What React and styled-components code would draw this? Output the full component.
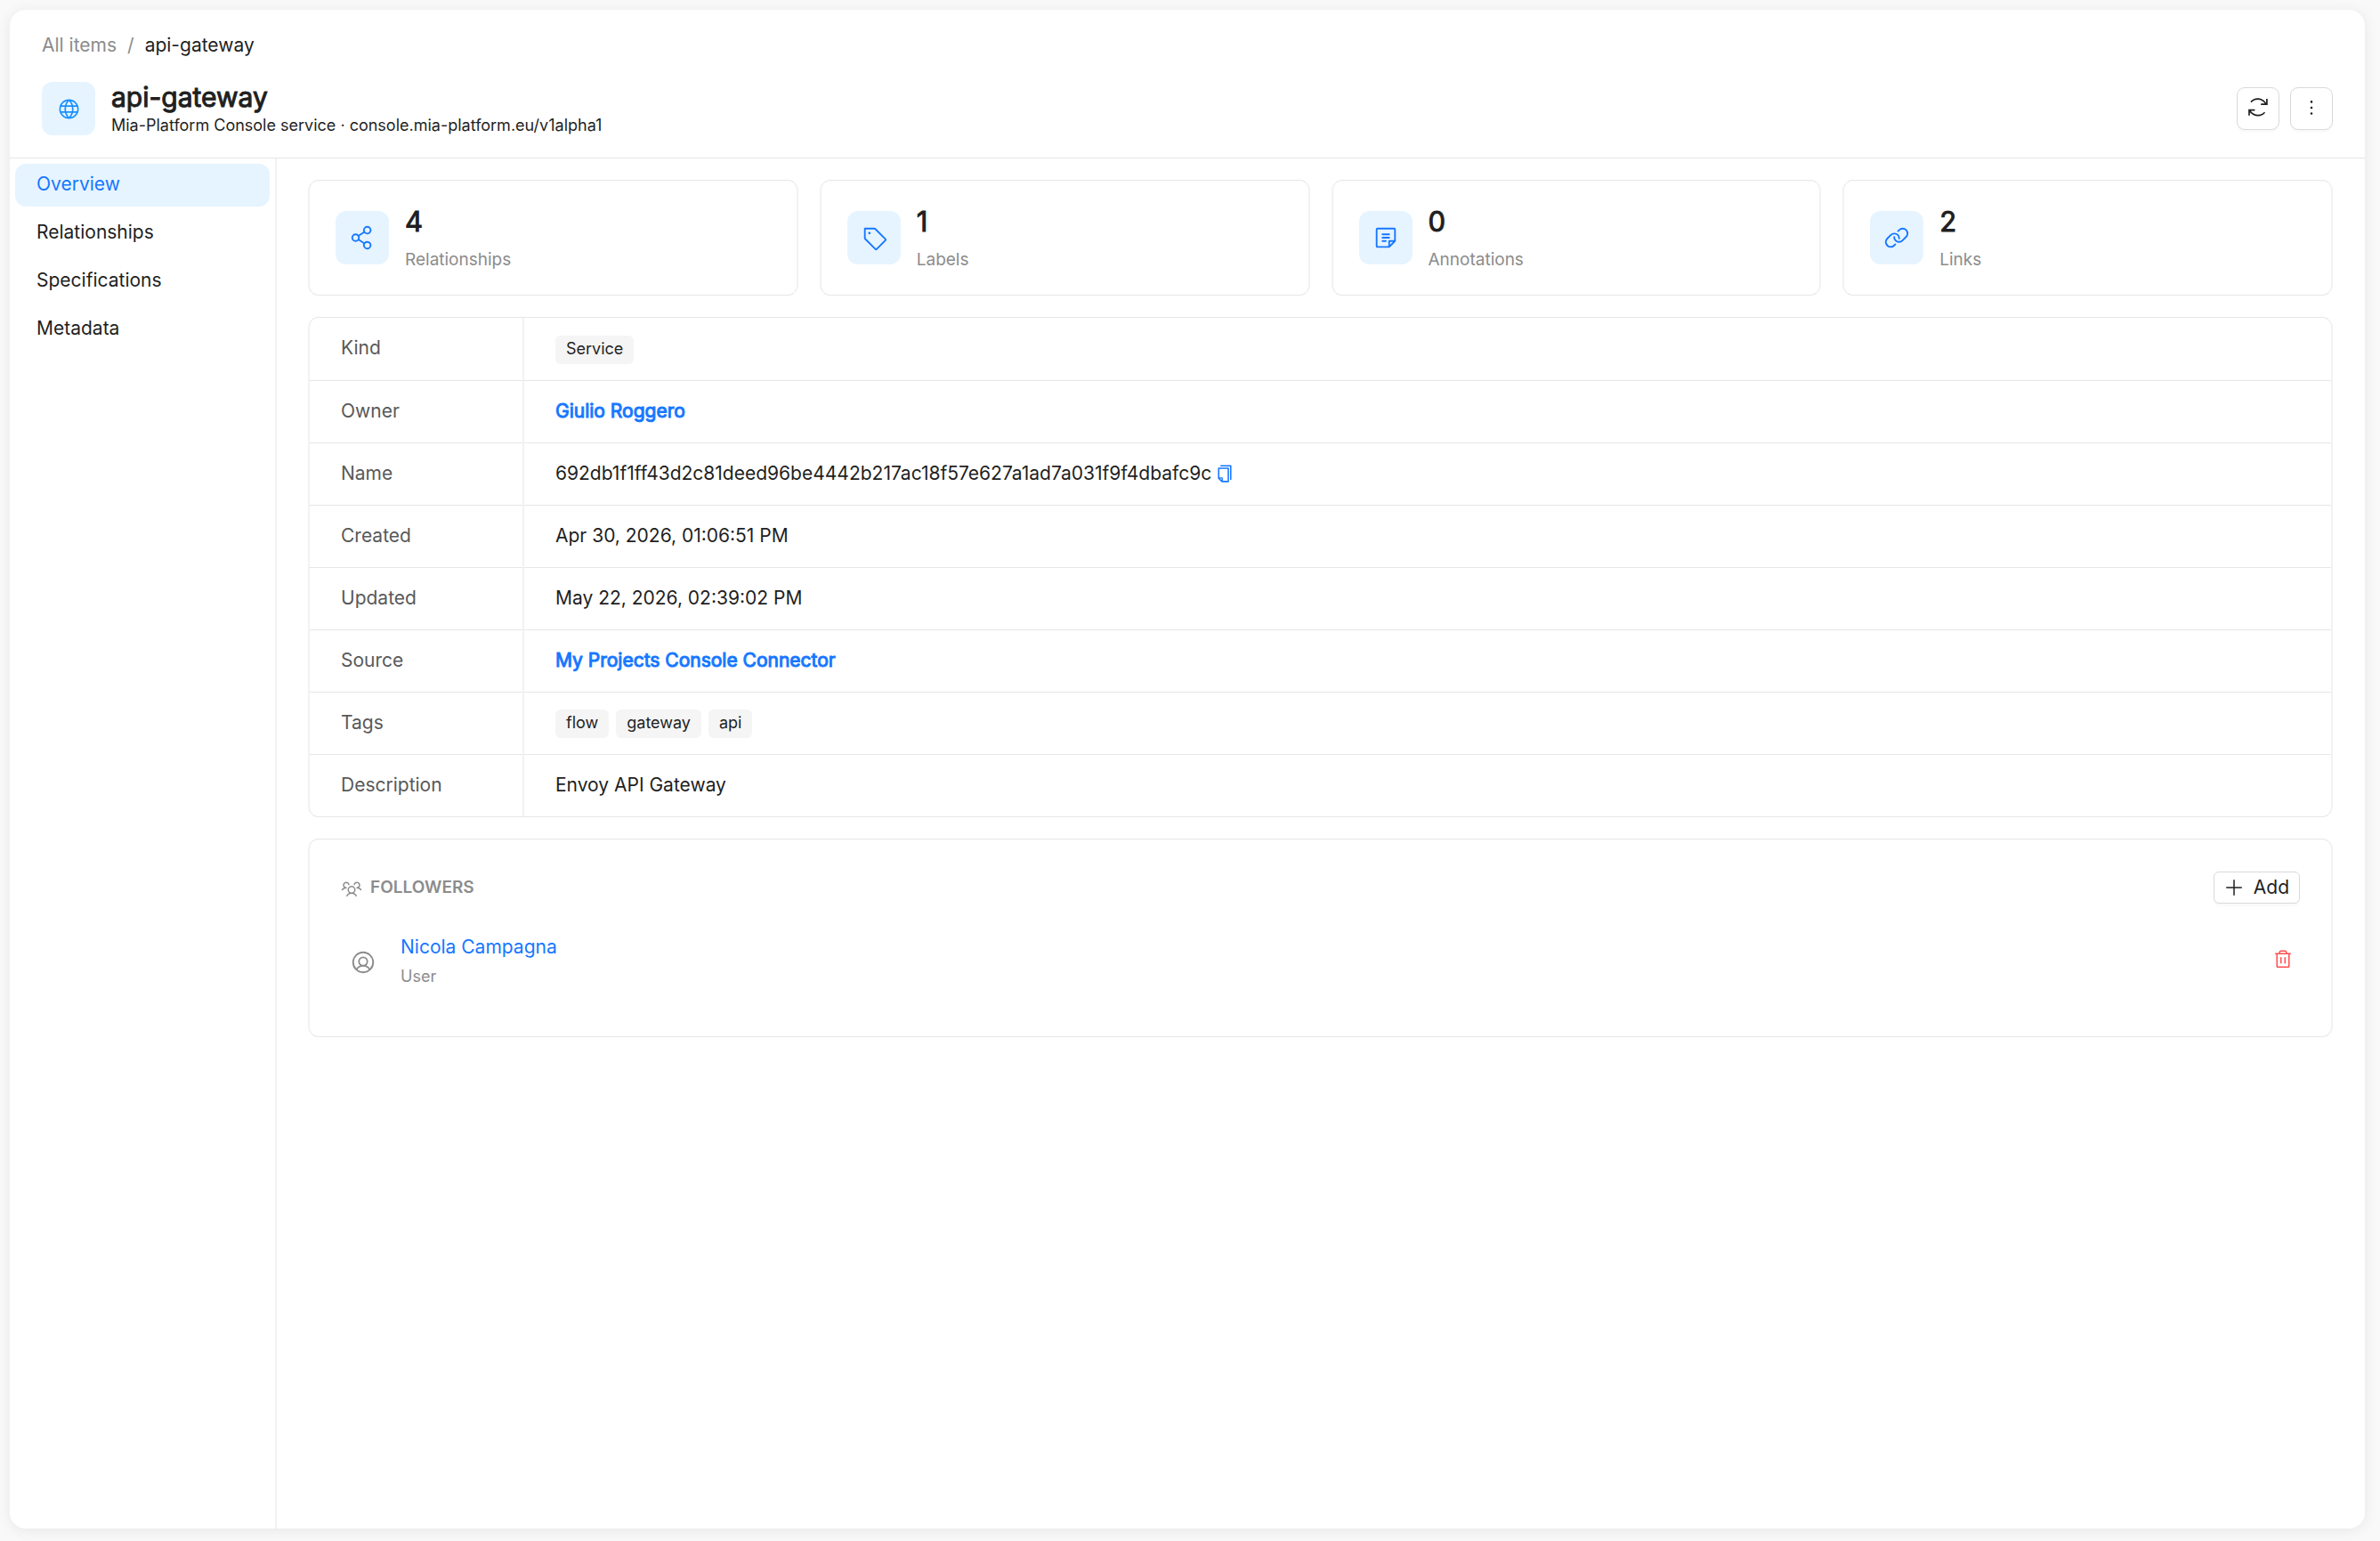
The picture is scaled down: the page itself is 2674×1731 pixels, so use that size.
import React from "react";
import styled, { createGlobalStyle } from "styled-components";
import { AiOutlineCopy, AiOutlineMore } from "react-icons/ai";
import {
  PiGlobe,
  PiLink,
  PiNote,
  PiPlus,
  PiShareNetwork,
  PiTag,
  PiTrash,
  PiUserCircle,
  PiUsersThree,
} from "react-icons/pi";

const GlobalStyle = createGlobalStyle`
  * {
    box-sizing: border-box;
  }

  body {
    margin: 0;
    background: #f9f9f9;
    color: #1f1f1f;
    font-family: Inter, "Liberation Sans", sans-serif;
    font-size: 21px;
    line-height: 32px;
  }

  button {
    font: inherit;
    color: inherit;
    cursor: pointer;
  }

  a {
    color: #1677ff;
    text-decoration: none;
  }
`;

const Shell = styled.div`
  display: flex;
  flex-direction: column;
  min-height: calc(100vh - 25px);
  margin: 11px 17px 14px 11px;
  background: #fff;
  border-radius: 18px;
  box-shadow: 0 2px 16px rgba(0, 0, 0, 0.08);
`;

const Header = styled.header`
  padding: 24px 36px 25px;
  border-bottom: 1px solid #e6e6e6;
`;

const Breadcrumb = styled.nav`
  display: flex;
  gap: 12px;
  color: #8c8c8c;

  a {
    color: inherit;
  }

  strong {
    color: #1f1f1f;
    font-weight: 400;
  }
`;

const HeaderRow = styled.div`
  display: flex;
  align-items: center;
  height: 60px;
  margin-top: 25px;
  gap: 18px;
`;

const IconBox = styled.span`
  display: flex;
  flex: none;
  align-items: center;
  justify-content: center;
  width: 60px;
  height: 60px;
  border-radius: 12px;
  background: #e6f4ff;
  color: ${(props) => props.$color || "#1677ff"};
  font-size: ${(props) => props.$size || 30}px;
`;

const Heading = styled.div`
  flex: 1;
  padding-top: 4px;
`;

const Title = styled.h1`
  margin: 0;
  font-size: 30px;
  font-weight: 400;
  line-height: 34px;
  -webkit-text-stroke: 1px;
`;

const Subtitle = styled.p`
  margin: 0;
  font-size: 18px;
  line-height: 30px;
`;

const Actions = styled.div`
  display: flex;
  gap: 12px;
`;

const IconButton = styled.button`
  display: flex;
  align-items: center;
  justify-content: center;
  width: 48px;
  height: 48px;
  padding: 0 0 3px;
  border: 1px solid #d9d9d9;
  border-radius: 9px;
  background: #fff;
  box-shadow: 0 3px 0 rgba(0, 0, 0, 0.02);
  font-size: 24px;
`;

const Body = styled.div`
  display: flex;
  flex: 1;
`;

const Sidebar = styled.nav`
  display: flex;
  flex: none;
  flex-direction: column;
  gap: 6px;
  width: 300px;
  padding: 6px;
  border-right: 2px solid #f2f2f2;
`;

const MenuLink = styled.a`
  height: 48px;
  padding: 0 24px;
  border-radius: 12px;
  background: ${(props) => (props.$active ? "#e6f4ff" : "transparent")};
  color: ${(props) => (props.$active ? "#1677ff" : "#1f1f1f")};
  line-height: 46px;
`;

const Main = styled.main`
  display: flex;
  flex: 1;
  flex-direction: column;
  gap: 24px;
  min-width: 0;
  padding: 24px 36px 24px 35px;
`;

const Card = styled.section`
  border: solid;
  border-width: 1px 2px;
  border-color: #e6e6e6 #f2f2f2;
  border-radius: 12px;
`;

const Stats = styled.div`
  display: grid;
  grid-template-columns: repeat(4, 1fr);
  gap: 24px;
`;

const StatCard = styled(Card)`
  display: flex;
  align-items: center;
  gap: 18px;
  height: 130px;
  padding: 0 29px;
`;

const StatValue = styled.div`
  font-size: 31px;
  font-weight: 400;
  line-height: 50px;
  -webkit-text-stroke: 1px;
`;

const StatLabel = styled.div`
  color: #8c8c8c;
  font-size: 19px;
  line-height: 36px;
`;

const Table = styled.table`
  width: 100%;
  border-collapse: collapse;

  th,
  td {
    height: 70px;
    padding: 0 35px 1px;
    text-align: left;
    font-weight: 400;
  }

  th {
    width: 240px;
    border-right: 2px solid #f2f2f2;
    color: #595959;
  }

  tr + tr {
    border-top: 1px solid #e6e6e6;
  }
`;

const Value = styled.div`
  display: flex;
  align-items: center;
  gap: 8px;
`;

const Tag = styled.span`
  height: 32px;
  margin-top: 3px;
  padding: 0 12px;
  border-radius: 6px;
  background: #f5f5f5;
  font-size: 18px;
  line-height: 30px;
`;

const StrongLink = styled.a`
  -webkit-text-stroke: 1px;
`;

const CopyName = styled.div`
  display: flex;
  align-items: center;
  gap: 4px;
`;

const CopyButton = styled.button`
  display: flex;
  padding: 0;
  border: 0;
  background: none;
  color: #1677ff;
  font-size: 22px;
`;

const RemoveButton = styled(CopyButton)`
  padding-bottom: 6px;
  color: #ff4d4f;
  font-size: 24px;
`;

const Followers = styled(Card)`
  height: 223px;
  padding: 36px 35px;
`;

const FollowersHeader = styled.div`
  display: flex;
  align-items: center;
  justify-content: space-between;
`;

const FollowersTitle = styled.h2`
  display: flex;
  align-items: center;
  gap: 9px;
  margin: 0;
  color: #8c8c8c;
  font-size: 19px;
  font-weight: 600;
  line-height: 34px;

  svg {
    margin-top: 2px;
    font-size: 24px;
  }
`;

const AddButton = styled.button`
  display: flex;
  align-items: center;
  gap: 10px;
  height: 36px;
  padding: 0 11px 0 10px;
  border: 1px solid #d9d9d9;
  border-radius: 6px;
  background: #fff;
  box-shadow: 0 3px 0 rgba(0, 0, 0, 0.02);

  svg {
    font-size: 24px;
  }
`;

const Follower = styled.div`
  display: flex;
  align-items: center;
  gap: 27px;
  margin-top: 33px;
  padding: 0 7px 0 10px;

  > svg {
    color: #8c8c8c;
    font-size: 30px;
  }
`;

const FollowerInfo = styled.div`
  flex: 1;
`;

const FollowerRole = styled.div`
  color: #8c8c8c;
  font-size: 18px;
  line-height: 34px;
`;

const RefreshIcon = () => (
  <svg width="22" height="21" viewBox="0 0 22 21" fill="none" stroke="currentColor" strokeWidth="1.7" aria-hidden="true">
    <path d="M3 4.6C7.5 -0.4 15.5 -0.3 20 6.6M14.2 7.2H20.9V1" />
    <path d="M18.5 16.2C14 21.2 6 21 1.5 14.2M7.4 13.6H1V19.8" />
  </svg>
);

const menu = ["Overview", "Relationships", "Specifications", "Metadata"];

const stats = [
  { label: "Relationships", value: 4, icon: <PiShareNetwork /> },
  { label: "Labels", value: 1, icon: <PiTag /> },
  { label: "Annotations", value: 0, icon: <PiNote /> },
  { label: "Links", value: 2, icon: <PiLink /> },
];

const details = [
  { label: "Kind", value: <Tag>Service</Tag> },
  { label: "Owner", value: <StrongLink href="#owner">Giulio Roggero</StrongLink> },
  {
    label: "Name",
    value: (
      <CopyName>
        <span>692db1f1ff43d2c81deed96be4442b217ac18f57e627a1ad7a031f9f4dbafc9c</span>
        <CopyButton aria-label="Copy name">
          <AiOutlineCopy />
        </CopyButton>
      </CopyName>
    ),
  },
  { label: "Created", value: "Apr 30, 2026, 01:06:51 PM" },
  { label: "Updated", value: "May 22, 2026, 02:39:02 PM" },
  { label: "Source", value: <StrongLink href="#source">My Projects Console Connector</StrongLink> },
  {
    label: "Tags",
    value: ["flow", "gateway", "api"].map((tag) => <Tag key={tag}>{tag}</Tag>),
  },
  { label: "Description", value: "Envoy API Gateway" },
];

const App = () => {
  return (
    <>
      <GlobalStyle />
      <Shell>
        <Header>
          <Breadcrumb aria-label="Breadcrumb">
            <a href="#items">All items</a>
            <span>/</span>
            <strong>api-gateway</strong>
          </Breadcrumb>
          <HeaderRow>
            <IconBox $color="#1890ff" $size={27}>
              <PiGlobe />
            </IconBox>
            <Heading>
              <Title>api-gateway</Title>
              <Subtitle>Mia-Platform Console service · console.mia-platform.eu/v1alpha1</Subtitle>
            </Heading>
            <Actions>
              <IconButton aria-label="Refresh">
                <RefreshIcon />
              </IconButton>
              <IconButton aria-label="More actions">
                <AiOutlineMore />
              </IconButton>
            </Actions>
          </HeaderRow>
        </Header>
        <Body>
          <Sidebar aria-label="Item sections">
            {menu.map((item, index) => (
              <MenuLink key={item} href={`#${item.toLowerCase()}`} $active={index === 0}>
                {item}
              </MenuLink>
            ))}
          </Sidebar>
          <Main>
            <Stats>
              {stats.map((stat) => (
                <StatCard key={stat.label}>
                  <IconBox>{stat.icon}</IconBox>
                  <div>
                    <StatValue>{stat.value}</StatValue>
                    <StatLabel>{stat.label}</StatLabel>
                  </div>
                </StatCard>
              ))}
            </Stats>
            <Card>
              <Table>
                <tbody>
                  {details.map((row) => (
                    <tr key={row.label}>
                      <th scope="row">{row.label}</th>
                      <td>
                        <Value>{row.value}</Value>
                      </td>
                    </tr>
                  ))}
                </tbody>
              </Table>
            </Card>
            <Followers>
              <FollowersHeader>
                <FollowersTitle>
                  <PiUsersThree />
                  FOLLOWERS
                </FollowersTitle>
                <AddButton>
                  <PiPlus />
                  Add
                </AddButton>
              </FollowersHeader>
              <Follower>
                <PiUserCircle />
                <FollowerInfo>
                  <a href="#follower">Nicola Campagna</a>
                  <FollowerRole>User</FollowerRole>
                </FollowerInfo>
                <RemoveButton aria-label="Remove follower">
                  <PiTrash />
                </RemoveButton>
              </Follower>
            </Followers>
          </Main>
        </Body>
      </Shell>
    </>
  );
};

export default App;
